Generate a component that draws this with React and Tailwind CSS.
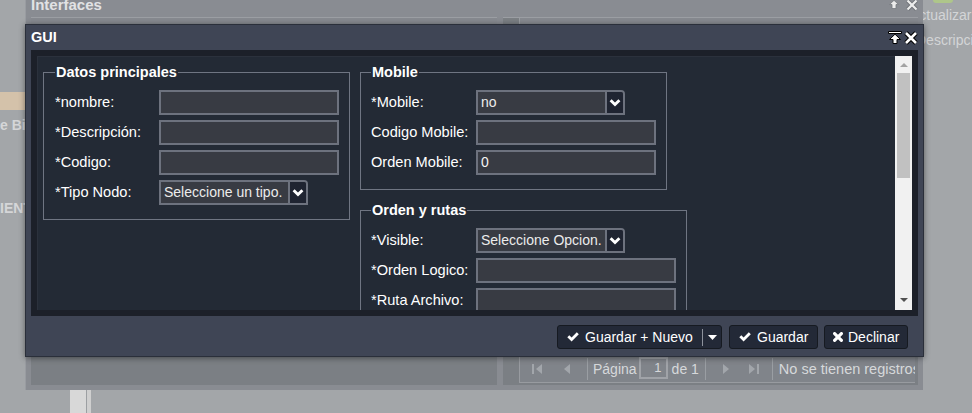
import React from 'react';

function Chevron() {
  return (
    <svg width="12" height="9" viewBox="0 0 12 9">
      <path d="M0.6 3.2L2.6 1.2L6 4.6L9.4 1.2L11.4 3.2L6 8.6Z" fill="#fff" />
    </svg>
  );
}

function CheckIcon() {
  return (
    <svg width="12" height="10" viewBox="0 0 12 10">
      <path d="M0.3 5.3L2.3 3.3L4.6 5.6L9.8 0.3L11.8 2.3L4.6 9.5Z" fill="#fff" />
    </svg>
  );
}

function TimesIcon() {
  return (
    <svg width="10" height="10" viewBox="0 0 10 10">
      <path d="M1.6 1.6L8.4 8.4M8.4 1.6L1.6 8.4" stroke="#fff" strokeWidth="3.2" strokeLinecap="round" />
    </svg>
  );
}

function Row({ label, lw, children }) {
  return (
    <div className="flex items-center h-[25px]">
      <span className={`${lw} shrink-0 text-[14.6px] text-white whitespace-nowrap`}>{label}</span>
      {children}
    </div>
  );
}

function Input({ w = 'w-[180px]', value }) {
  return (
    <div className={`${w} h-[25px] border-2 border-[#6d727e] bg-[#383b43] pl-[3px] text-[14px] leading-[21px] text-[#f4f4f4]`}>
      {value}
    </div>
  );
}

function Select({ value }) {
  return (
    <div className="w-[149px] h-[25px] flex border-2 border-[#6d727e] rounded-tr-[4px] bg-[#383b43]">
      <div className="flex-1 overflow-hidden whitespace-nowrap pl-[3px] text-[14px] leading-[21px] text-[#ececec]">{value}</div>
      <div className="w-[18px] shrink-0 border-l-2 border-[#6d727e] bg-[#1f2431] rounded-tr-[2px] flex items-center justify-center">
        <Chevron />
      </div>
    </div>
  );
}

function Group({ title, className, children }) {
  return (
    <fieldset className={`border border-[#6f7582] pr-[10px] pt-[10px] pb-[14px] min-w-0 ${className}`}>
      <legend className="px-[1px] text-[14.5px] leading-[16px] font-bold text-white">{title}</legend>
      <div className="flex flex-col gap-[5px]">{children}</div>
    </fieldset>
  );
}

function Scrollbar() {
  return (
    <div className="w-[17px] shrink-0 bg-[#f1f1f1] flex flex-col items-center">
      <svg className="mt-[7px]" width="8" height="4" viewBox="0 0 8 4">
        <path d="M0 4L4 0L8 4Z" fill="#a3a3a3" />
      </svg>
      <div className="mt-[6px] w-[13px] h-[105px] bg-[#c1c1c1]" />
      <div className="flex-1" />
      <svg className="mb-[8px]" width="8" height="4" viewBox="0 0 8 4">
        <path d="M0 0H8L4 4Z" fill="#505050" />
      </svg>
    </div>
  );
}

function Dialog() {
  return (
    <div className="absolute left-[25px] top-[24px] w-[899px] h-[333px] flex flex-col bg-[#3f4555] border border-[#2a2f3a] shadow-[0_1px_6px_rgba(0,0,0,0.45)]">
      {/* header */}
      <div className="h-[25px] shrink-0 flex items-center px-[5px]">
        <span className="text-[14.5px] font-bold text-white">GUI</span>
        <div className="ml-auto flex items-center gap-[2px]">
          <svg width="14" height="13" viewBox="0 0 14 13">
            <path d="M0.5 0.5H13.5V2.5H0.5Z M7 3.2L12.5 8.5H9V12.5H5V8.5H1.5Z" fill="#fff" stroke="#000" strokeWidth="1" />
          </svg>
          <svg width="14" height="14" viewBox="0 0 14 14">
            <path d="M2 2L12 12M12 2L2 12" stroke="#000" strokeWidth="4.6" />
            <path d="M2 2L12 12M12 2L2 12" stroke="#fff" strokeWidth="2.6" />
          </svg>
        </div>
      </div>

      {/* body frame */}
      <div className="mx-[5px] h-[266px] shrink-0 border-[6px] border-[#1c2029] flex">
        <div className="flex-1 overflow-hidden bg-[#232a35] border-l border-t border-[#2b313c] pl-[5px] pt-[7px] flex items-start gap-[10px]">
          <Group title="Datos principales" className="w-[307px] pl-[11px] shrink-0">
            <Row label="*nombre:" lw="w-[104px]"><Input /></Row>
            <Row label="*Descripción:" lw="w-[104px]"><Input /></Row>
            <Row label="*Codigo:" lw="w-[104px]"><Input /></Row>
            <Row label="*Tipo Nodo:" lw="w-[104px]"><Select value="Seleccione un tipo." /></Row>
          </Group>
          <div className="flex flex-col gap-[12px] shrink-0">
            <Group title="Mobile" className="w-[307px] pl-[10px]">
              <Row label="*Mobile:" lw="w-[105px]"><Select value="no" /></Row>
              <Row label="Codigo Mobile:" lw="w-[105px]"><Input /></Row>
              <Row label="Orden Mobile:" lw="w-[105px]"><Input value="0" /></Row>
            </Group>
            <Group title="Orden y rutas" className="w-[327px] pl-[10px]">
              <Row label="*Visible:" lw="w-[105px]"><Select value="Seleccione Opcion." /></Row>
              <Row label="*Orden Logico:" lw="w-[105px]"><Input w="w-[200px]" /></Row>
              <Row label="*Ruta Archivo:" lw="w-[105px]"><Input w="w-[200px]" /></Row>
              <Row label="*Icono:" lw="w-[105px]"><Input w="w-[200px]" /></Row>
            </Group>
          </div>
        </div>
        <Scrollbar />
      </div>

      {/* footer */}
      <div className="flex-1 flex justify-end items-start pt-[9px] pr-[15px] gap-[6px] text-[14px] text-white">
        <div className="w-[165px] mr-[1px] h-[24px] flex items-center rounded-[3px] border border-[#161a21] bg-[#232937]">
          <div className="flex-1 flex items-center gap-[6px] pl-[9px]">
            <CheckIcon />
            <span>Guardar + Nuevo</span>
          </div>
          <div className="w-px h-[17px] bg-[#8d929c]" />
          <div className="w-[18px] flex justify-center">
            <svg width="9" height="5" viewBox="0 0 9 5"><path d="M0 0H9L4.5 5Z" fill="#fff" /></svg>
          </div>
        </div>
        <div className="w-[89px] h-[24px] flex items-center gap-[6px] pl-[9px] rounded-[3px] border border-[#161a21] bg-[#232937]">
          <CheckIcon />
          <span>Guardar</span>
        </div>
        <div className="w-[84px] h-[24px] flex items-center gap-[5px] pl-[8px] rounded-[3px] border border-[#161a21] bg-[#232937]">
          <TimesIcon />
          <span>Declinar</span>
        </div>
      </div>
    </div>
  );
}

function PagerTri({ dir }) {
  return (
    <svg width="6" height="10" viewBox="0 0 6 10">
      <path d={dir === 'left' ? 'M6 0V10L0 5Z' : 'M0 0V10L6 5Z'} fill="#a2a6ab" />
    </svg>
  );
}

function BackWindow() {
  return (
    <div className="w-[898px] shrink-0 flex flex-col bg-[#898c92] border-l border-[#999ca1]">
      <div className="h-[17px] shrink-0 flex items-start px-[5px]">
        <div className="-mt-[3px] text-[15px] leading-[15px] font-bold text-[#e1e2e4]">Interfaces</div>
        <div className="ml-auto flex items-start gap-[7px]">
          <svg width="10" height="9" viewBox="0 0 10 9">
            <path d="M5 0.3L9.5 4.5H7V8.5H3V4.5H0.5Z" fill="#ececec" stroke="#75787d" strokeWidth="0.8" />
          </svg>
          <svg width="12" height="11" viewBox="0 0 12 11">
            <path d="M1.5 0.5L10.5 9.5M10.5 0.5L1.5 9.5" stroke="#707378" strokeWidth="4" />
            <path d="M1.5 0.5L10.5 9.5M10.5 0.5L1.5 9.5" stroke="#ececec" strokeWidth="2.2" />
          </svg>
        </div>
      </div>
      <div className="flex-1 flex px-[5px] pb-[5px] gap-[6px]">
        <div className="w-[466px] shrink-0 flex flex-col bg-[#7b7f84] border-t border-[#9b9ea3]">
          <div className="h-[30px] bg-[#878a90]" />
        </div>
        <div className="flex-1 min-w-0 flex flex-col bg-[#7b7f84] border-t border-[#9b9ea3]">
          <div className="h-[30px] ml-[16px] bg-[#878a90] border-l border-[#9b9ea3]" />
          <div className="mt-auto ml-[16px] mr-[3px] mb-[2px] h-[26px] flex items-start pt-[4px] bg-[#80848a] border-l border-b border-[#989ba0] text-[14px] leading-[16px] text-[#d6d8da] whitespace-nowrap overflow-hidden">
            <div className="shrink-0 ml-[12px] mt-[3px] flex items-center">
              <div className="w-[2px] h-[10px] bg-[#a2a6ab] mr-[2px]" />
              <PagerTri dir="left" />
            </div>
            <div className="shrink-0 ml-[22px] mt-[3px]"><PagerTri dir="left" /></div>
            <div className="shrink-0 ml-[17px] -mt-[3px] w-px h-[22px] bg-[#9a9ea3]" />
            <span className="shrink-0 ml-[5px]">Página</span>
            <div className="shrink-0 ml-[2px] -mt-[4px] w-[29px] h-[22px] border-2 border-[#a0a3a8] text-right pr-[4px] text-[13px] leading-[18px]">1</div>
            <span className="shrink-0 ml-[4px]">de 1</span>
            <div className="shrink-0 ml-[6px] -mt-[3px] w-px h-[22px] bg-[#9a9ea3]" />
            <div className="shrink-0 ml-[17px] mt-[3px]"><PagerTri dir="right" /></div>
            <div className="shrink-0 ml-[20px] mt-[3px] flex items-center">
              <PagerTri dir="right" />
              <div className="w-[2px] h-[10px] bg-[#a2a6ab] ml-[2px]" />
            </div>
            <div className="shrink-0 ml-[13px] -mt-[3px] w-px h-[22px] bg-[#9a9ea3]" />
            <span className="shrink-0 ml-[6px] text-[14.5px]">No se tienen registros</span>
          </div>
        </div>
      </div>
    </div>
  );
}

export default function App() {
  return (
    <div className="relative w-[972px] h-[413px] overflow-hidden bg-[#a3a6a9] font-['Liberation_Sans',Arial,sans-serif]">
      <div className="flex h-[390px]">
        {/* left strip */}
        <div className="w-[25px] shrink-0 overflow-hidden text-[#d5d6d8] font-bold text-[14px] leading-[16px] whitespace-nowrap">
          <div className="mt-[92px] h-[18px] bg-[#d4c2aa]" />
          <div className="mt-[7px]">e Bi</div>
          <div className="mt-[67px]">IENTO</div>
        </div>
        <BackWindow />
        {/* right strip */}
        <div className="w-[49px] shrink-0 overflow-hidden text-[14px] leading-[16px] text-[#d3d5d7] whitespace-nowrap">
          <div className="ml-[10px] w-[20px] h-[3px] rounded-b-full bg-[#aec68a]" />
          <div className="mt-[4px] -ml-[13px]">Actualizar</div>
          <div className="mt-[9px] -ml-[7px]">Descripción</div>
        </div>
      </div>
      <div className="flex h-[23px]">
        <div className="ml-[70px] w-[16px] bg-[#d8d8d8]" />
        <div className="w-px bg-[#9c9fa2]" />
        <div className="w-[4px] bg-[#cfcfcf]" />
      </div>
      <Dialog />
    </div>
  );
}
